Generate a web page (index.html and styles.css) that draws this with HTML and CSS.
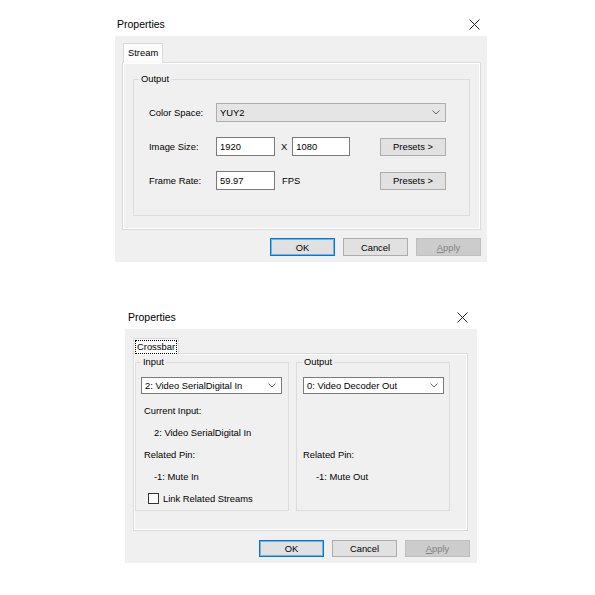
FILE: index.html
```html
<!DOCTYPE html>
<html lang="en">
<head>
  <meta charset="UTF-8">
  <title>Properties</title>
  <link rel="stylesheet" href="styles.css">
</head>
<body>
  <div class="screen">

    <!-- Stream property page -->
    <div class="dialog dialog-stream">
      <div class="titlebar">
        <span class="title">Properties</span>
        <svg class="close" width="11" height="11" viewBox="0 0 11 11"><path d="M0.5 0.5 L10.5 10.5 M10.5 0.5 L0.5 10.5" stroke="#222" stroke-width="1" fill="none"/></svg>
      </div>
      <div class="dlg-body">
        <div class="tabs">
          <div class="tab">Stream</div>
        </div>
        <div class="panel panel-stream">
          <div class="group group-stream">
            <div class="group-title">Output</div>
            <div class="form-row first">
              <span class="lbl">Color Space:</span>
              <div class="combo combo-ro">
                <span>YUY2</span>
                <svg width="8" height="5" viewBox="0 0 8 5"><path d="M0.5 0.5 L4 4 L7.5 0.5" stroke="#666" fill="none"/></svg>
              </div>
            </div>
            <div class="form-row">
              <span class="lbl">Image Size:</span>
              <div class="field w59">1920</div>
              <span class="sep">X</span>
              <div class="field w58">1080</div>
              <button class="btn presets">Presets &gt;</button>
            </div>
            <div class="form-row">
              <span class="lbl">Frame Rate:</span>
              <div class="field w59">59.97</div>
              <span class="unit">FPS</span>
              <button class="btn presets">Presets &gt;</button>
            </div>
          </div>
        </div>
        <div class="actions">
          <button class="btn btn-default">OK</button>
          <button class="btn">Cancel</button>
          <button class="btn btn-disabled"><u>A</u>pply</button>
        </div>
      </div>
    </div>

    <!-- Crossbar property page -->
    <div class="dialog dialog-crossbar">
      <div class="titlebar">
        <span class="title">Properties</span>
        <svg class="close" width="11" height="11" viewBox="0 0 11 11"><path d="M0.5 0.5 L10.5 10.5 M10.5 0.5 L0.5 10.5" stroke="#222" stroke-width="1" fill="none"/></svg>
      </div>
      <div class="dlg-body">
        <div class="tabs">
          <div class="tab tab-focus"><span>Crossbar</span></div>
        </div>
        <div class="panel panel-crossbar">
          <div class="group group-input">
            <div class="group-title">Input</div>
            <div class="combo combo-white">
              <span>2: Video SerialDigital In</span>
              <svg width="8" height="5" viewBox="0 0 8 5"><path d="M0.5 0.5 L4 4 L7.5 0.5" stroke="#666" fill="none"/></svg>
            </div>
            <div class="info first">Current Input:</div>
            <div class="info value">2: Video SerialDigital In</div>
            <div class="info">Related Pin:</div>
            <div class="info value">-1: Mute In</div>
            <label class="check-row"><span class="checkbox"></span>Link Related Streams</label>
          </div>
          <div class="group group-output">
            <div class="group-title">Output</div>
            <div class="combo combo-white">
              <span>0: Video Decoder Out</span>
              <svg width="8" height="5" viewBox="0 0 8 5"><path d="M0.5 0.5 L4 4 L7.5 0.5" stroke="#666" fill="none"/></svg>
            </div>
            <div class="info-spacer"></div>
            <div class="info">Related Pin:</div>
            <div class="info value">-1: Mute Out</div>
          </div>
        </div>
        <div class="actions">
          <button class="btn btn-default">OK</button>
          <button class="btn">Cancel</button>
          <button class="btn btn-disabled"><u>A</u>pply</button>
        </div>
      </div>
    </div>

  </div>
</body>
</html>
```

FILE: styles.css
```css
* {
  box-sizing: border-box;
}

body {
  margin: 0;
  padding: 0;
  background: #fff;
  color: #000;
  font-family: "Liberation Sans", Arial, sans-serif;
  font-size: 9.4px;
}

.screen {
  padding-top: 12px;
}

.dialog {
  background: #fff;
}

.dialog-stream {
  margin-left: 115px;
  width: 372px;
}

.dialog-crossbar {
  margin-left: 125px;
  margin-top: 43px;
  width: 352px;
}

.titlebar {
  height: 24px;
  display: flex;
  align-items: center;
  justify-content: space-between;
}

.dialog-stream .titlebar {
  padding: 0 7px 0 2px;
}

.dialog-crossbar .titlebar {
  padding: 0 9px 0 3px;
}

.title {
  font-size: 10.5px;
}

.dlg-body {
  background: #f0f0f0;
}

.dialog-stream .dlg-body {
  padding: 7px 6px 6px 7px;
}

.dialog-crossbar .dlg-body {
  padding: 9px 9px 6px 8px;
}

/* tabs */
.tabs {
  display: flex;
}

.dialog-stream .tabs {
  padding-left: 1px;
}

.tab {
  position: relative;
  z-index: 1;
  height: 20px;
  margin-bottom: -1px;
  padding: 0 4px;
  line-height: 18px;
  background: #fcfcfc;
  border: 1px solid #d9d9d9;
  border-bottom: none;
}

.tab-focus {
  height: 16px;
  padding: 1px 1px 0;
  line-height: 12px;
}

.tab-focus span {
  display: block;
  padding: 0 1px;
  border: 1px dotted #000;
}

.panel {
  display: flex;
  border: 1px solid #dadada;
  box-shadow: inset 0 0 0 1px #fff;
}

.panel-stream {
  height: 168px;
  padding: 16px 10px 13px 10px;
}

.panel-crossbar {
  height: 178px;
  padding: 8px 17px 19px 1px;
  gap: 7px;
}

/* group boxes */
.group {
  flex: 1;
  border: 1px solid #dcdcdc;
}

.group-title {
  width: fit-content;
  margin-top: -7px;
  padding: 0 2px;
  line-height: 12px;
  background: #f0f0f0;
}

.group-stream {
  padding: 0 23px 0 15px;
}

.group-stream .group-title {
  margin-left: -10px;
}

.group-input {
  padding: 0 6px 0 5px;
}

.group-output {
  padding: 0 5px 0 6px;
}

.group-output .group-title {
  margin-left: -1px;
}

/* stream form */
.form-row {
  display: flex;
  align-items: center;
  height: 19px;
  margin-top: 15px;
}

.form-row.first {
  margin-top: 18px;
}

.lbl {
  width: 67px;
}

.combo {
  display: flex;
  align-items: center;
  justify-content: space-between;
  flex: 1;
  padding: 0 5px 0 3px;
}

.combo-ro {
  height: 19px;
  background: #e5e5e5;
  border: 1px solid #adadad;
}

.combo-white {
  height: 17px;
  margin-top: 9px;
  background: #fff;
  border: 1px solid #7a7a7a;
}

.field {
  height: 19px;
  padding: 0 3px;
  line-height: 17px;
  background: #fff;
  border: 1px solid #7a7a7a;
}

.w59 {
  width: 59px;
}

.w58 {
  width: 58px;
}

.sep {
  margin: 0 5px 0 6px;
}

.unit {
  margin-left: 7px;
}

/* buttons */
.btn {
  height: 18px;
  width: 65px;
  padding: 0;
  font: inherit;
  color: #000;
  background: #e1e1e1;
  border: 1px solid #adadad;
}

.presets {
  width: 66px;
  margin-left: auto;
}

.btn-default {
  border-color: #0078d7;
  box-shadow: inset 0 0 0 1px rgba(0, 120, 215, 0.45);
}

.btn-disabled {
  color: #838383;
  background: #cccccc;
  border-color: #bfbfbf;
}

.actions {
  display: flex;
  justify-content: flex-end;
  gap: 8px;
}

.dialog-stream .actions {
  margin-top: 8px;
}

.dialog-crossbar .actions {
  margin-top: 9px;
  margin-right: -2px;
}

.dialog-crossbar .btn {
  height: 17px;
}

/* crossbar info */
.info {
  line-height: 22px;
}

.group-input .info {
  padding-left: 3px;
}

.info.first {
  margin-top: 6px;
}

.info.value {
  padding-left: 13px;
}

.info-spacer {
  height: 50px;
}

.check-row {
  display: flex;
  align-items: center;
  height: 20px;
  padding-left: 7px;
}

.checkbox {
  width: 11px;
  height: 11px;
  margin-right: 4px;
  background: #fff;
  border: 1px solid #333;
}
```
